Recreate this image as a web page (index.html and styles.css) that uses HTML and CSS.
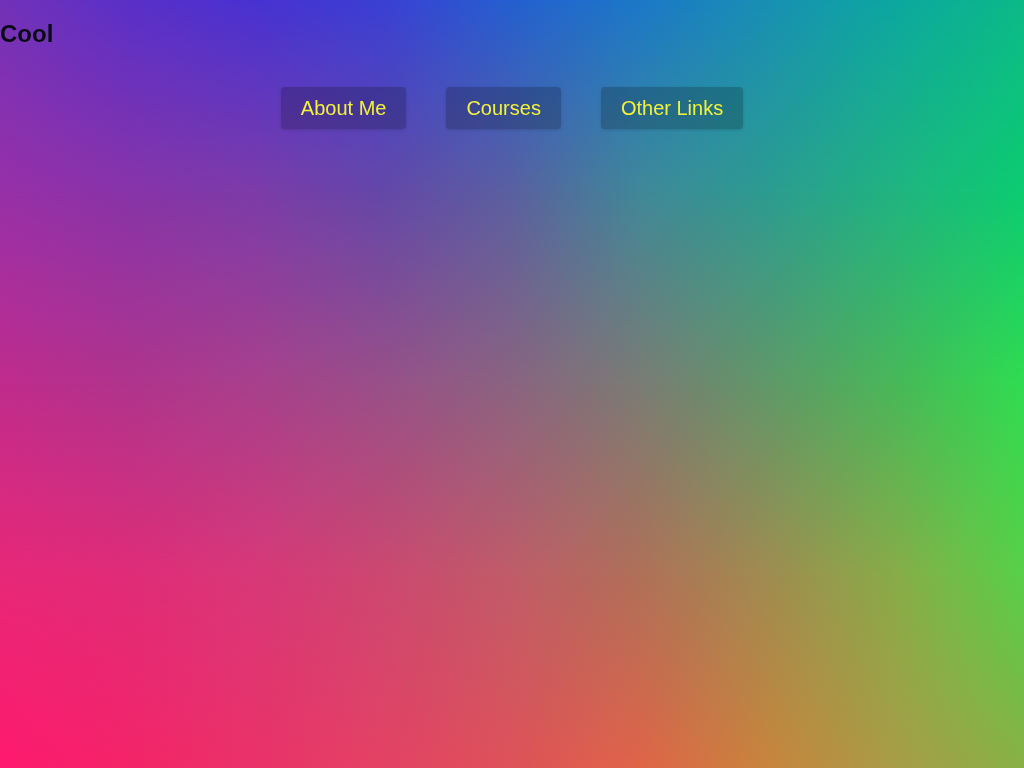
FILE: index.html
```html
<!DOCTYPE html>
<html lang="en">
<head>
<meta charset="utf-8">
<title>Cool</title>
<link rel="stylesheet" href="styles.css">
</head>
<body>
<div class="sky" aria-hidden="true">
  <div class="band band-0"></div>
  <div class="band band-1"></div>
  <div class="band band-2"></div>
  <div class="band band-3"></div>
  <div class="band band-4"></div>
</div>
<header class="site-header">
  <h1 class="brand">Cool</h1>
</header>
<nav class="main-nav">
  <a class="nav-button" href="#about">About Me</a>
  <a class="nav-button" href="#courses">Courses</a>
  <a class="nav-button" href="#links">Other Links</a>
</nav>
</body>
</html>
```

FILE: styles.css
```css
html, body {
  margin: 0;
  padding: 0;
}

body {
  min-height: 100vh;
  font-family: "Liberation Sans", Arial, sans-serif;
}

.sky {
  position: fixed;
  inset: 0;
  z-index: -1;
  display: grid;
}

.band {
  grid-area: 1 / 1;
}

.band-0 {
  background: linear-gradient(to right,
    #7232b8 0%, #5a30c8 12.5%, #4832d2 25%, #3a40d4 37.5%, #2460d0 50%,
    #1c78c8 62.5%, #1890b4 75%, #0ca8a0 87.5%, #0cba88 100%);
}

.band-1 {
  background: linear-gradient(to right,
    #9830a8 0%, #8834a8 12.5%, #7c3ca8 25%, #6448a8 37.5%, #5a60a0 50%,
    #408898 62.5%, #2c9c90 75%, #20b480 87.5%, #0ccc70 100%);
  -webkit-mask-image: linear-gradient(to bottom, transparent 0%, #000 25%);
  mask-image: linear-gradient(to bottom, transparent 0%, #000 25%);
}

.band-2 {
  background: linear-gradient(to right,
    #c02c8c 0%, #b0348c 12.5%, #a8408c 25%, #985088 37.5%, #8a6480 50%,
    #7a7c74 62.5%, #609868 75%, #48b858 87.5%, #30dc50 100%);
  -webkit-mask-image: linear-gradient(to bottom, transparent 25%, #000 50%);
  mask-image: linear-gradient(to bottom, transparent 25%, #000 50%);
}

.band-3 {
  background: linear-gradient(to right,
    #e82878 0%, #e02c78 12.5%, #d83878 25%, #cc4870 37.5%, #c05c68 50%,
    #b07058 62.5%, #a08c50 75%, #88ac48 87.5%, #58d048 100%);
  -webkit-mask-image: linear-gradient(to bottom, transparent 50%, #000 75%);
  mask-image: linear-gradient(to bottom, transparent 50%, #000 75%);
}

.band-4 {
  background: linear-gradient(to right,
    #ff1a6e 0%, #f42468 12.5%, #ea3268 25%, #e44264 37.5%, #de5258 50%,
    #e06448 62.5%, #c8843c 75%, #a89c48 87.5%, #88b044 100%);
  -webkit-mask-image: linear-gradient(to bottom, transparent 75%, #000 100%);
  mask-image: linear-gradient(to bottom, transparent 75%, #000 100%);
}

.site-header {
  padding-top: 20px;
}

.brand {
  margin: 0;
  font-size: 24px;
  line-height: 28px;
  font-weight: bold;
  color: #0a0a14;
}

.main-nav {
  display: flex;
  justify-content: center;
  gap: 40px;
  margin-top: 39px;
}

.nav-button {
  display: block;
  padding: 10px 20px;
  font-size: 20px;
  line-height: 22px;
  color: #f2f23a;
  text-decoration: none;
  background: rgba(0, 0, 0, 0.2);
  border-radius: 4px;
  box-shadow: 0 1px 3px rgba(0, 0, 0, 0.15);
}
```
